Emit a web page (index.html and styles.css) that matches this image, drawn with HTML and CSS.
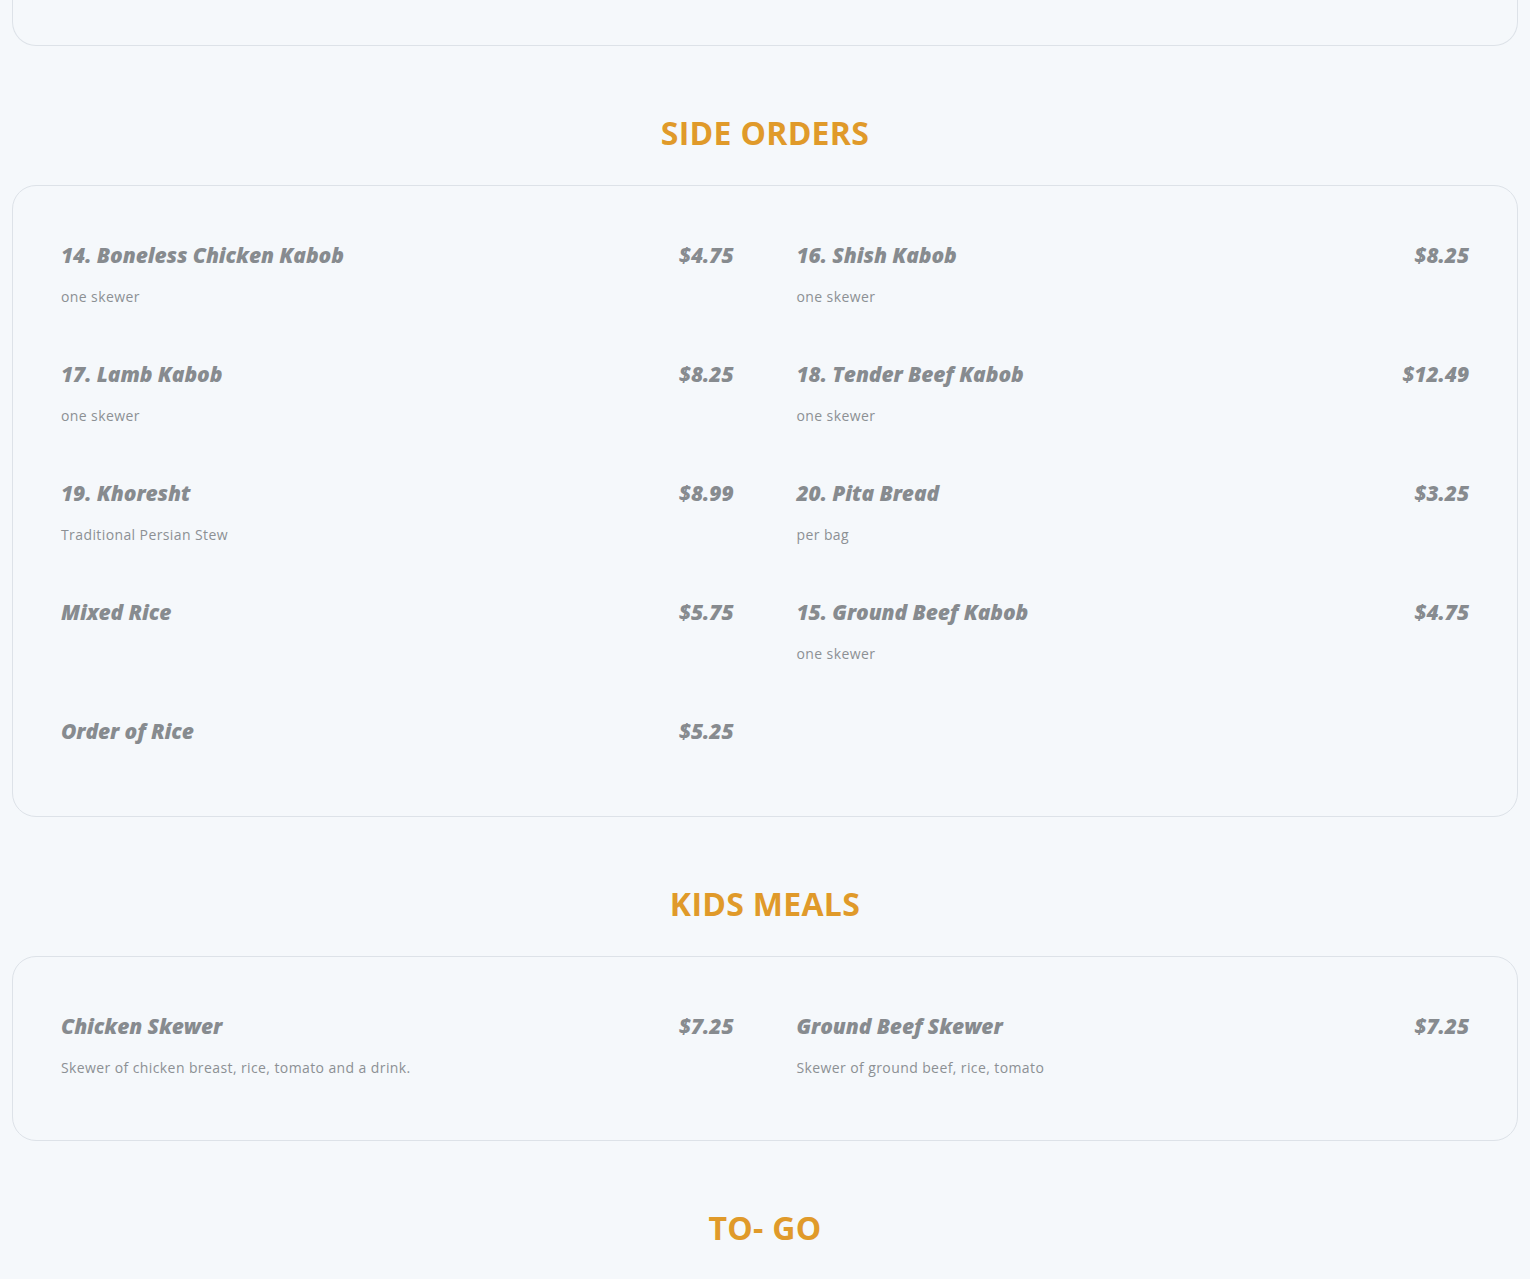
FILE: index.html
```html
<!DOCTYPE html>
<html lang="en">
<head>
<meta charset="utf-8">
<title>Menu</title>
<link rel="stylesheet" href="styles.css">
</head>
<body>
<main class="menu">
  <div class="card card-tail"></div>

  <section class="section">
    <h2 class="section-title">SIDE ORDERS</h2>
    <div class="card">
      <div class="grid">
        <div class="item"><div class="item-head"><span class="name">14. Boneless Chicken Kabob</span><span class="price">$4.75</span></div><p class="desc">one skewer</p></div>
        <div class="item"><div class="item-head"><span class="name">16. Shish Kabob</span><span class="price">$8.25</span></div><p class="desc">one skewer</p></div>
        <div class="item"><div class="item-head"><span class="name">17. Lamb Kabob</span><span class="price">$8.25</span></div><p class="desc">one skewer</p></div>
        <div class="item"><div class="item-head"><span class="name">18. Tender Beef Kabob</span><span class="price">$12.49</span></div><p class="desc">one skewer</p></div>
        <div class="item"><div class="item-head"><span class="name">19. Khoresht</span><span class="price">$8.99</span></div><p class="desc">Traditional Persian Stew</p></div>
        <div class="item"><div class="item-head"><span class="name">20. Pita Bread</span><span class="price">$3.25</span></div><p class="desc">per bag</p></div>
        <div class="item"><div class="item-head"><span class="name">Mixed Rice</span><span class="price">$5.75</span></div></div>
        <div class="item"><div class="item-head"><span class="name">15. Ground Beef Kabob</span><span class="price">$4.75</span></div><p class="desc">one skewer</p></div>
        <div class="item"><div class="item-head"><span class="name">Order of Rice</span><span class="price">$5.25</span></div></div>
      </div>
    </div>
  </section>

  <section class="section">
    <h2 class="section-title">KIDS MEALS</h2>
    <div class="card">
      <div class="grid">
        <div class="item"><div class="item-head"><span class="name">Chicken Skewer</span><span class="price">$7.25</span></div><p class="desc">Skewer of chicken breast, rice, tomato and a drink.</p></div>
        <div class="item"><div class="item-head"><span class="name">Ground Beef Skewer</span><span class="price">$7.25</span></div><p class="desc">Skewer of ground beef, rice, tomato</p></div>
      </div>
    </div>
  </section>

  <section class="section">
    <h2 class="section-title">TO- GO</h2>
  </section>
</main>
</body>
</html>
```

FILE: styles.css
```css
* { box-sizing: border-box; }

html, body {
  margin: 0;
  padding: 0;
  background: #f5f8fb;
}

body {
  font-family: "Open Sans", "Liberation Sans", sans-serif;
  color: #878b8f;
}

.menu {
  padding: 0 12px;
}

.card {
  border: 1px solid #dde2e8;
  border-radius: 24px;
  background: #f5f8fb;
  padding: 54px 48px 62px 48px;
}

.card-tail {
  height: 46px;
  padding: 0;
  border-top: none;
  border-radius: 0 0 24px 24px;
}

.section {
  padding-top: 63px;
}

.section-title {
  margin: 0 0 28px 0;
  text-align: center;
  font-family: "Open Sans", "Liberation Sans", sans-serif;
  font-weight: 700;
  font-size: 32px;
  line-height: 48px;
  letter-spacing: 0.3px;
  color: #e09a2a;
}

.grid {
  display: grid;
  grid-template-columns: 1fr 1fr;
  column-gap: 63px;
  row-gap: 52px;
}

.item {
  display: flex;
  flex-direction: column;
}

.item-head {
  display: flex;
  justify-content: space-between;
  align-items: center;
  height: 30px;
  margin-bottom: 8px;
}

.name,
.price {
  font-family: "Open Sans", "Liberation Sans", sans-serif;
  font-style: italic;
  font-weight: 800;
  font-size: 21px;
  line-height: 30px;
  color: #878b8f;
  letter-spacing: -0.1px;
}

.desc {
  margin: 8px 0 0 0;
  font-family: "Open Sans", "Liberation Sans", sans-serif;
  font-size: 14px;
  line-height: 21px;
  letter-spacing: 0.4px;
  color: #8c9094;
}
```
